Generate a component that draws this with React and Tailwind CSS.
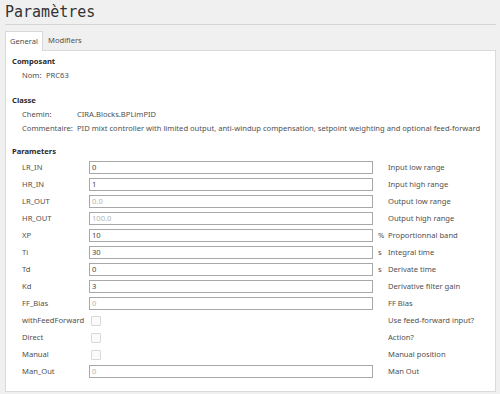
import React from 'react'

const params = [
  { name: 'LR_IN', value: '0', desc: 'Input low range' },
  { name: 'HR_IN', value: '1', desc: 'Input high range' },
  { name: 'LR_OUT', value: '0.0', desc: 'Output low range', muted: true },
  { name: 'HR_OUT', value: '100.0', desc: 'Output high range', muted: true },
  { name: 'XP', value: '10', unit: '%', desc: 'Proportionnal band' },
  { name: 'Ti', value: '30', unit: 's', desc: 'Integral time' },
  { name: 'Td', value: '0', unit: 's', desc: 'Derivate time' },
  { name: 'Kd', value: '3', desc: 'Derivative filter gain' },
  { name: 'FF_Bias', value: '0', desc: 'FF Bias', muted: true },
  { name: 'withFeedForward', check: true, desc: 'Use feed-forward input?' },
  { name: 'Direct', check: true, desc: 'Action?' },
  { name: 'Manual', check: true, desc: 'Manual position' },
  { name: 'Man_Out', value: '0', desc: 'Man Out', muted: true },
]

function ParamRow({ p }) {
  return (
    <div className="flex items-center h-[17px]">
      <div className="w-[77px] pl-[10px] shrink-0 whitespace-nowrap">{p.name}</div>
      <div className="w-[284px] shrink-0 flex items-center">
        {p.check ? (
          <div className="ml-[2px] w-[10px] h-[10px] border border-[#d8d8d8] bg-[#fafafa] rounded-[1px]"></div>
        ) : (
          <div
            className={
              'w-full h-[13px] border border-[#a8a8a8] bg-white pl-[2px] leading-[11px] ' +
              (p.muted ? 'text-[#b4b4b4]' : 'text-[#4a4a4a]')
            }
          >
            {p.value}
          </div>
        )}
      </div>
      <div className="w-[15px] shrink-0 pl-[5px]">{p.unit || ''}</div>
      <div className="whitespace-nowrap">{p.desc}</div>
    </div>
  )
}

export default function App() {
  return (
    <div className="w-[500px] h-[394px] bg-[#f0f0f0] px-[5px] pr-[4px] flex flex-col text-[7.6px] text-[#505050] font-['Noto_Sans',sans-serif] overflow-hidden">
      <div className="pt-[2px] pb-[2px] border-b border-[#d4d4d4] font-['DejaVu_Sans_Mono',monospace] text-[15px] leading-[20px] text-[#333]">
        Paramètres
      </div>

      <div className="flex mt-[6px] h-[20px] relative z-10 -mb-px">
        <div className="px-[4px] bg-white border border-b-0 border-[#d8d8d8] flex items-center">General</div>
        <div className="px-[5px] flex items-center">Modifiers</div>
      </div>

      <div className="h-[342px] bg-white border border-[#dadada] pl-[6px] pt-[4px]">
        <div className="h-[14px] flex items-center font-bold text-[#2a2a2a]">Composant</div>
        <div className="h-[14px] flex items-center pl-[10px]">
          <span className="w-[24px]">Nom:</span>
          <span>PRC63</span>
        </div>

        <div className="h-[14px] mt-[11px] flex items-center font-bold text-[#2a2a2a]">Classe</div>
        <div className="h-[14px] flex items-center pl-[10px]">
          <span className="w-[55px] shrink-0">Chemin:</span>
          <span>CIRA.Blocks.BPLimPID</span>
        </div>
        <div className="h-[14px] flex items-center pl-[10px]">
          <span className="w-[55px] shrink-0">Commentaire:</span>
          <span className="whitespace-nowrap">PID mixt controller with limited output, anti-windup compensation, setpoint weighting and optional feed-forward</span>
        </div>

        <div className="h-[14px] mt-[9px] flex items-center font-bold text-[#2a2a2a]">Parameters</div>
        <div className="flex flex-col">
          {params.map(p => (
            <ParamRow key={p.name} p={p} />
          ))}
        </div>
      </div>
    </div>
  )
}
